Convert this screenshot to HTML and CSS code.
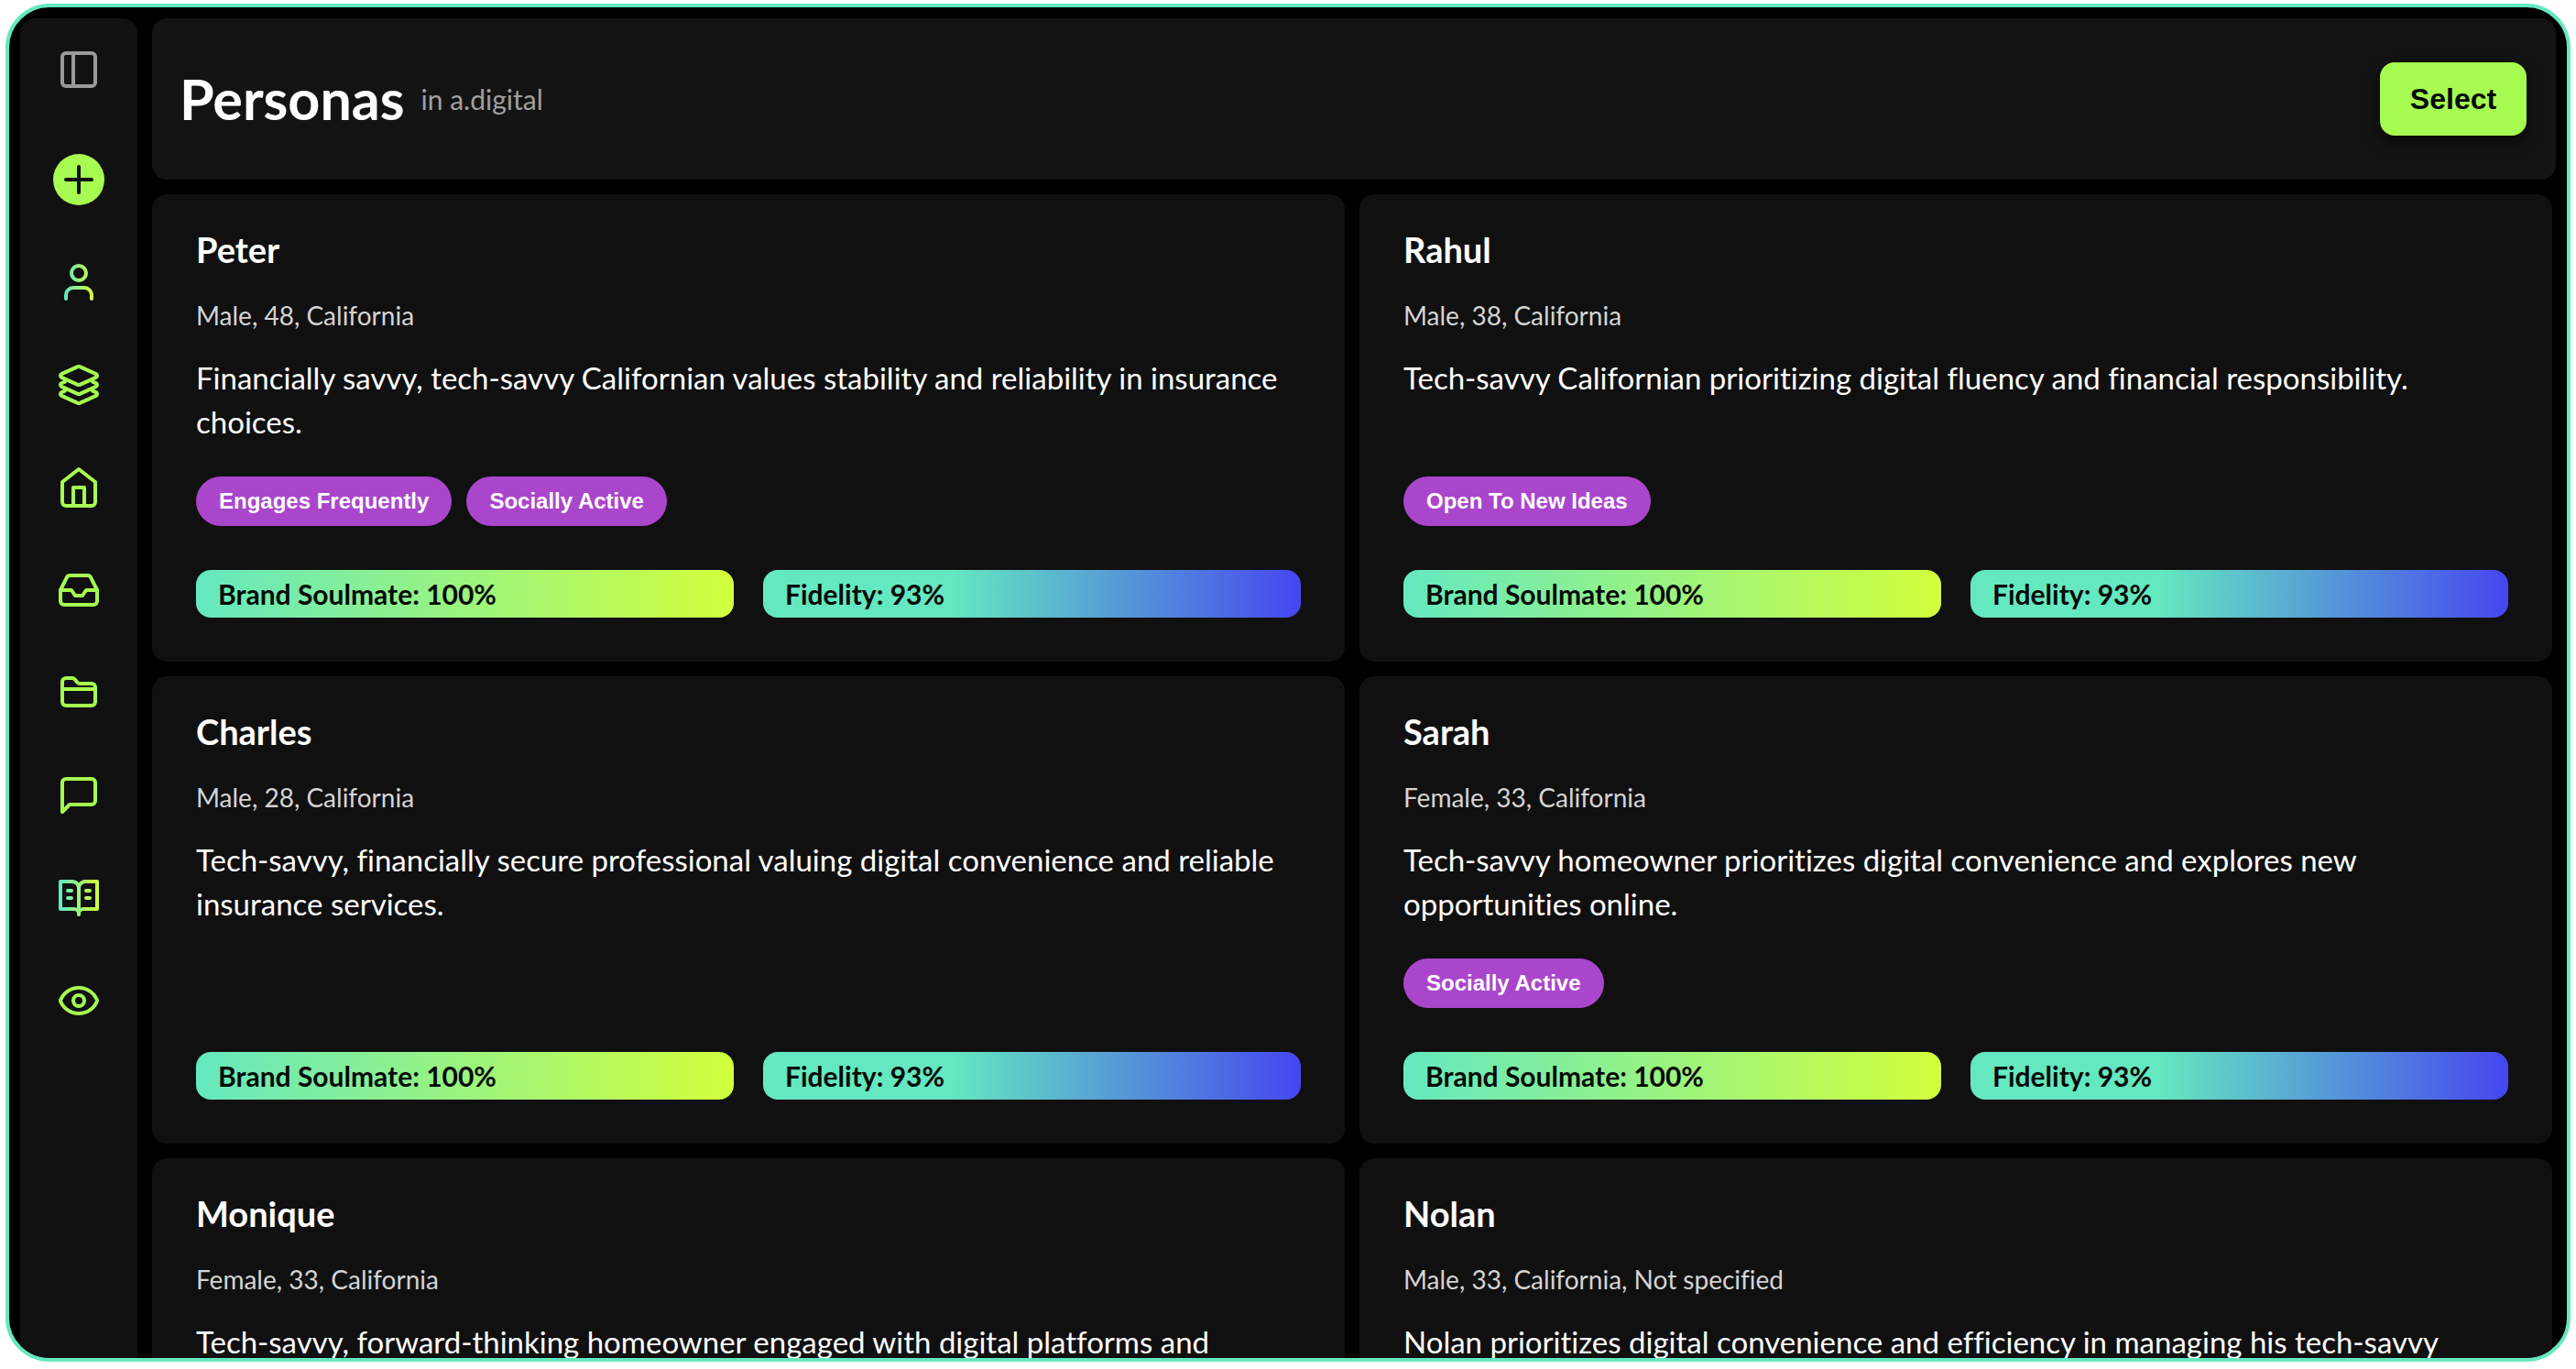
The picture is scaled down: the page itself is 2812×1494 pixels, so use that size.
FILE: index.html
```html
<!DOCTYPE html>
<html lang="en">
<head>
  <meta charset="UTF-8" />
  <meta name="viewport" content="width=device-width, initial-scale=1.0"/>
  <title>Personas</title>
  <link rel="stylesheet" href="styles.css">
</head>
<body>
  <div class="app">
    <nav class="sidebar">
      <button class="nav-btn toggle" aria-label="Toggle sidebar">
        <svg class="icon" viewBox="0 0 24 24"><rect x="3" y="3" width="18" height="18" rx="2"/><path d="M9 3v18"/></svg>
      </button>
      <button class="nav-btn add" aria-label="Add">
        <svg class="icon" viewBox="0 0 24 24"><path d="M5 12h14M12 5v14"/></svg>
      </button>
      <a class="nav-btn" href="#" aria-label="Personas">
        <svg class="icon" viewBox="0 0 24 24">
          <defs>
            <linearGradient id="userGradient" gradientUnits="userSpaceOnUse" x1="5" y1="0" x2="19" y2="0">
              <stop offset="0" stop-color="#64e8c0"/>
              <stop offset="1" stop-color="#d2ff3c"/>
            </linearGradient>
          </defs>
          <g stroke="url(#userGradient)"><path d="M19 21v-2a4 4 0 0 0-4-4H9a4 4 0 0 0-4 4v2"/><circle cx="12" cy="7" r="4"/></g>
        </svg>
      </a>
      <a class="nav-btn" href="#" aria-label="Layers">
        <svg class="icon" viewBox="0 0 24 24">
          <path d="M12.830 2.180a2 2 0 0 0-1.660 0L2.600 6.080a1 1 0 0 0 0 1.830l8.580 3.910a2 2 0 0 0 1.660 0l8.580-3.900a1 1 0 0 0 0-1.830z"/>
          <path d="M4.500 10.300 2.600 11.080a1 1 0 0 0 0 1.830l8.580 3.910a2 2 0 0 0 1.660 0l8.580-3.900a1 1 0 0 0 0-1.830l-1.900-.8"/>
          <path d="M4.500 15.300 2.600 16.080a1 1 0 0 0 0 1.830l8.580 3.910a2 2 0 0 0 1.660 0l8.580-3.900a1 1 0 0 0 0-1.830l-1.900-.8"/>
        </svg>
      </a>
      <a class="nav-btn" href="#" aria-label="Home">
        <svg class="icon" viewBox="0 0 24 24"><path d="m3 9 9-7 9 7v11a2 2 0 0 1-2 2H5a2 2 0 0 1-2-2z"/><path d="M9 22V12h6v10"/></svg>
      </a>
      <a class="nav-btn" href="#" aria-label="Inbox">
        <svg class="icon" viewBox="0 0 24 24"><path d="M22 12h-6l-2 3h-4l-2-3H2"/><path d="M5.450 5.110 2 12v6a2 2 0 0 0 2 2h16a2 2 0 0 0 2-2v-6l-3.450-6.890A2 2 0 0 0 16.760 4H7.240a2 2 0 0 0-1.790 1.110z"/></svg>
      </a>
      <a class="nav-btn" href="#" aria-label="Folders">
        <svg class="icon" viewBox="0 0 24 24"><path d="M3 17V6a2 2 0 0 1 2-2h3.500a2 2 0 0 1 1.500.8l1 1.400a2 2 0 0 0 1.500.8H19a2 2 0 0 1 2 2v8a2 2 0 0 1-2 2H5a2 2 0 0 1-2-2z"/><path d="M3 10h18"/></svg>
      </a>
      <a class="nav-btn" href="#" aria-label="Messages">
        <svg class="icon" viewBox="0 0 24 24"><path d="M21 15a2 2 0 0 1-2 2H7l-4 4V5a2 2 0 0 1 2-2h14a2 2 0 0 1 2 2z"/></svg>
      </a>
      <a class="nav-btn" href="#" aria-label="Library">
        <svg class="icon" viewBox="0 0 24 24">
          <defs>
            <linearGradient id="bookGradient" gradientUnits="userSpaceOnUse" x1="2" y1="0" x2="22" y2="0">
              <stop offset="0" stop-color="#64e8c0"/>
              <stop offset="1" stop-color="#d2ff3c"/>
            </linearGradient>
          </defs>
          <g stroke="url(#bookGradient)"><path d="M12 21V6a4 4 0 0 0-3.500-3H2v15h7.500a2.500 2.500 0 0 1 2.500 3 2.500 2.500 0 0 1 2.500-3H22V3h-6.500A4 4 0 0 0 12 6"/><path d="M6 8h2M6 12h2M16 8h2M16 12h2"/></g>
        </svg>
      </a>
      <a class="nav-btn" href="#" aria-label="View">
        <svg class="icon" viewBox="0 0 24 24"><path d="M2.060 12.350a1 1 0 0 1 0-.7 10.750 10.750 0 0 1 19.880 0 1 1 0 0 1 0 .7 10.750 10.750 0 0 1-19.880 0"/><circle cx="12" cy="12" r="3"/></svg>
      </a>
    </nav>

    <main class="main">
      <header class="header">
        <div class="heading">
          <h1>Personas</h1>
          <span class="workspace">in a.digital</span>
        </div>
        <button class="select-btn">Select</button>
      </header>

      <section class="cards">
        <article class="card">
          <h2>Peter</h2>
          <p class="meta">Male, 48, California</p>
          <p class="desc">Financially savvy, tech-savvy Californian values stability and reliability in insurance choices.</p>
          <div class="tags">
            <span class="tag">Engages Frequently</span>
            <span class="tag">Socially Active</span>
          </div>
          <div class="scores">
            <div class="score soulmate">Brand Soulmate: 100%</div>
            <div class="score fidelity">Fidelity: 93%</div>
          </div>
        </article>

        <article class="card">
          <h2>Rahul</h2>
          <p class="meta">Male, 38, California</p>
          <p class="desc">Tech-savvy Californian prioritizing digital fluency and financial responsibility.</p>
          <div class="tags">
            <span class="tag">Open To New Ideas</span>
          </div>
          <div class="scores">
            <div class="score soulmate">Brand Soulmate: 100%</div>
            <div class="score fidelity">Fidelity: 93%</div>
          </div>
        </article>

        <article class="card">
          <h2>Charles</h2>
          <p class="meta">Male, 28, California</p>
          <p class="desc">Tech-savvy, financially secure professional valuing digital convenience and reliable insurance services.</p>
          <div class="tags"></div>
          <div class="scores">
            <div class="score soulmate">Brand Soulmate: 100%</div>
            <div class="score fidelity">Fidelity: 93%</div>
          </div>
        </article>

        <article class="card">
          <h2>Sarah</h2>
          <p class="meta">Female, 33, California</p>
          <p class="desc">Tech-savvy homeowner prioritizes digital convenience and explores new opportunities online.</p>
          <div class="tags">
            <span class="tag">Socially Active</span>
          </div>
          <div class="scores">
            <div class="score soulmate">Brand Soulmate: 100%</div>
            <div class="score fidelity">Fidelity: 93%</div>
          </div>
        </article>

        <article class="card">
          <h2>Monique</h2>
          <p class="meta">Female, 33, California</p>
          <p class="desc">Tech-savvy, forward-thinking homeowner engaged with digital platforms and</p>
        </article>

        <article class="card">
          <h2>Nolan</h2>
          <p class="meta">Male, 33, California, Not specified</p>
          <p class="desc">Nolan prioritizes digital convenience and efficiency in managing his tech-savvy</p>
        </article>
      </section>
    </main>
  </div>
</body>
</html>
```
FILE: styles.css
```css
* {
  box-sizing: border-box;
}

body {
  margin: 0;
  padding: 4px 6px 8px;
  height: 100vh;
  background: #fff;
  color: #fff;
  font-family: Lato, sans-serif;
  font-variant-ligatures: none;
  overflow: hidden;
}

h1,
h2,
p {
  margin: 0;
}

.app {
  display: flex;
  gap: 16px;
  height: 100%;
  padding: 12px 12px 0;
  border: 4px solid #64e8c0;
  border-radius: 48px;
  background: #000;
  overflow: hidden;
}

.sidebar {
  display: flex;
  flex-direction: column;
  align-items: center;
  gap: 56px;
  flex: 0 0 128px;
  padding-top: 28px;
  border-radius: 16px 16px 0 0;
  background: #111;
}

.nav-btn {
  display: flex;
  align-items: center;
  justify-content: center;
  flex-shrink: 0;
  width: 56px;
  height: 56px;
  padding: 0;
  border: 0;
  background: none;
  color: #a6fc50;
  cursor: pointer;
}

.nav-btn.toggle {
  margin-bottom: 8px;
  color: #999;
}

.nav-btn.add {
  border-radius: 50%;
  background: #a6fc50;
  color: #111;
}

.icon {
  width: 48px;
  height: 48px;
  fill: none;
  stroke: currentColor;
  stroke-width: 2;
  stroke-linecap: round;
  stroke-linejoin: round;
}

.main {
  display: flex;
  flex-direction: column;
  gap: 16px;
  flex: 1;
  min-width: 0;
}

.header {
  display: flex;
  align-items: center;
  justify-content: space-between;
  flex-shrink: 0;
  height: 176px;
  padding: 0 32px 0 30px;
  border-radius: 16px;
  background: #131313;
}

.heading {
  display: flex;
  align-items: center;
  gap: 18px;
}

h1 {
  font-size: 61px;
  line-height: 72px;
  font-weight: 700;
}

.workspace {
  color: #a0a0a0;
  font-size: 30px;
  line-height: 40px;
}

.select-btn {
  min-width: 160px;
  padding: 20px 32px;
  border: 0;
  border-radius: 16px;
  background: #a6fc50;
  box-shadow: 0 8px 16px rgba(0, 0, 0, 0.5);
  color: #050a05;
  font: 700 32px/40px "Liberation Sans", sans-serif;
  cursor: pointer;
}

.cards {
  display: grid;
  grid-template-columns: 1fr 1fr;
  grid-auto-rows: max-content;
  gap: 16px;
  padding-right: 4px;
}

.card {
  display: flex;
  flex-direction: column;
  min-height: 510px;
  padding: 34px 48px 48px;
  border-radius: 16px;
  background: #101010;
}

h2 {
  font-size: 38px;
  line-height: 52px;
  font-weight: 700;
}

.meta {
  margin-top: 26px;
  color: #d4d4d4;
  font-size: 28px;
  line-height: 40px;
}

.desc {
  min-height: 96px;
  margin-top: 24px;
  font-size: 33px;
  line-height: 48px;
}

.tags {
  display: flex;
  gap: 16px;
  min-height: 54px;
  margin-top: 36px;
}

.tag {
  padding: 0 25px;
  border-radius: 27px;
  background: #aa46cc;
  font: 700 24px/54px "Liberation Sans", sans-serif;
}

.scores {
  display: grid;
  grid-template-columns: 1fr 1fr;
  gap: 32px;
  margin-top: auto;
}

.score {
  padding: 0 24px;
  border-radius: 16px;
  color: #050a05;
  font-size: 30px;
  line-height: 52px;
  font-weight: 700;
}

.soulmate {
  background: linear-gradient(90deg, #64e8c0, #d2ff3c);
}

.fidelity {
  background: linear-gradient(90deg, #64e8c0 35%, #4646f0);
}
```
